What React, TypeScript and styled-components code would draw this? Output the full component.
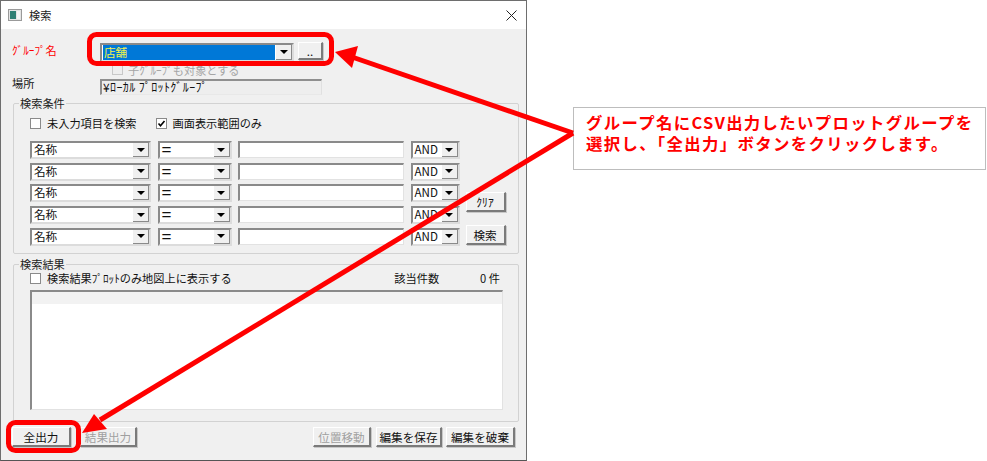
import React from "react";
import styled, { createGlobalStyle } from "styled-components";

const Global = createGlobalStyle`
  html, body { margin: 0; padding: 0; background: #fff; }
  body { width: 987px; height: 461px; overflow: hidden; font-family: "Noto Sans CJK JP", "Liberation Sans", sans-serif; font-size: 11.2px; color: #111; }
`;

const Page = styled.div`
  position: relative;
  width: 987px;
  height: 461px;
  display: flex;
  align-items: flex-start;
`;

const Dialog = styled.div`
  width: 527px;
  height: 461px;
  box-sizing: border-box;
  border: 1px solid #6e6e6e;
  border-bottom-color: #555;
  background: #f0f0f0;
  display: flex;
  flex-direction: column;
  flex: none;
`;

const TitleBar = styled.div`
  height: 28px;
  background: #fff;
  display: flex;
  align-items: center;
  padding: 0 9px 0 7px;
  gap: 7px;
  font-size: 11.2px;
  flex: none;
`;

const TitleText = styled.span`
  flex: 1;
  color: #222;
`;

const Body = styled.div`
  flex: 1;
  display: flex;
  flex-direction: column;
  padding: 14px 6px 0 11px;
`;

const TopRow = styled.div`
  display: grid;
  grid-template-columns: 84px 194px 25px;
  column-gap: 4px;
  align-items: start;
  height: 20px;
`;

const RedLabel = styled.span`
  color: #ff0000;
  line-height: 14px;
`;

const DisabledRow = styled.div`
  display: flex;
  align-items: center;
  gap: 5px;
  height: 13px;
  margin-left: 100px;
  color: #a5a5a5;
`;

const PlaceRow = styled.div`
  display: grid;
  grid-template-columns: 88px 222px;
  align-items: start;
  margin-top: 3px;
`;

const PlaceLabel = styled.span`
  line-height: 14px;
  margin-top: -3px;
`;

const ReadonlyField = styled.div`
  height: 16px;
  box-sizing: border-box;
  border: 1px solid #8f8f8f;
  border-left-width: 2px;
  border-top-width: 2px;
  border-right-color: #e0e0e0;
  border-bottom-color: #e8e8e8;
  background: #eeeeee;
  font-size: 12px;
  letter-spacing: 0.4px;
  line-height: 12px;
  padding-left: 1px;
  white-space: nowrap;
`;

const Group = styled.fieldset<{ $h: number; $mt: number }>`
  height: ${(p) => p.$h}px;
  width: 506px;
  margin: ${(p) => p.$mt}px 0 0 1px;
  padding: 0 15px 0 16px;
  box-sizing: border-box;
  border: 1px solid #d2d2d2;
  border-radius: 2px;
  min-width: 0;
  flex: none;
`;

const Legend = styled.legend`
  line-height: 12px;
  padding: 0 1px;
  margin-left: -11px;
  color: #222;
`;

const ChecksRow = styled.div`
  display: flex;
  align-items: center;
  gap: 19px;
  height: 18px;
  margin-top: 5px;
  margin-bottom: 9px;
`;

const CheckLabel = styled.label`
  display: flex;
  align-items: center;
  gap: 6px;
  white-space: nowrap;
`;

const Box = styled.span<{ $off?: boolean }>`
  width: 11px;
  height: 11px;
  flex: none;
  box-sizing: border-box;
  border: 1px solid ${(p) => (p.$off ? "#c8c8c8" : "#8a8a8a")};
  background: ${(p) => (p.$off ? "#eeeeee" : "#fff")};
  display: block;
`;

const SearchArea = styled.div`
  display: grid;
  grid-template-columns: auto 40px;
  column-gap: 6px;
`;

const Rows = styled.div`
  display: grid;
  grid-template-rows: repeat(5, 18px);
  row-gap: 3.7px;
`;

const Row = styled.div`
  display: grid;
  grid-template-columns: 121px 74px 166px 49px;
  column-gap: 6.5px;
`;

const Combo = styled.div<{ $top?: boolean }>`
  box-sizing: border-box;
  height: ${(p) => (p.$top ? "19px" : "18px")};
  background: #fff;
  border: 2px solid #8a8a8a;
  border-right-color: #dcdcdc;
  border-bottom-color: #dcdcdc;
  display: flex;
  align-items: stretch;
  min-width: 0;
`;

const ComboValue = styled.span<{ $big?: boolean }>`
  flex: 1;
  min-width: 0;
  font-family: ${(p) => (p.$big ? '"Liberation Sans", sans-serif' : "inherit")};
  font-size: ${(p) => (p.$big ? "17px" : "11.6px")};
  line-height: 13px;
  padding-left: 2px;
  white-space: nowrap;
`;

const SelectedValue = styled.span`
  flex: 1;
  background: #0078d7;
  color: #f4f44a;
  line-height: 14px;
  font-size: 11.6px;
  padding-left: 1px;
  margin: 0 1px;
`;

const ComboArrow = styled.span`
  width: 16px;
  flex: none;
  background: #f0f0f0;
  border-right: 1px solid #8a8a8a;
  border-bottom: 1px solid #8a8a8a;
  box-sizing: border-box;
  display: flex;
  align-items: center;
  justify-content: center;
  &::after {
    content: "";
    border-left: 4px solid transparent;
    border-right: 4px solid transparent;
    border-top: 4px solid #000;
  }
`;

const TextInput = styled.div`
  box-sizing: border-box;
  height: 17px;
  background: #fff;
  border: 2px solid #8a8a8a;
  border-right: 1px solid #e2e2e2;
  border-bottom: 1px solid #e2e2e2;
`;

const SideButtons = styled.div`
  display: flex;
  flex-direction: column;
  gap: 13px;
  padding-top: 51px;
`;

const Btn = styled.button<{ $w?: number; $h?: number; $mr?: number; $mt?: number }>`
  width: ${(p) => (p.$w ? `${p.$w}px` : "100%")};
  height: ${(p) => p.$h ?? 20}px;
  margin: ${(p) => p.$mt ?? 0}px ${(p) => p.$mr ?? 0}px 0 0;
  padding: 0;
  flex: none;
  background: #f0f0f0;
  border: 1px solid #fff;
  border-right: 2px solid #7a7a7a;
  border-bottom: 2px solid #7a7a7a;
  box-shadow: 1px 1px 0 #c8c8c8;
  font: inherit;
  font-size: 11.6px;
  line-height: 14px;
  color: ${(p) => (p.disabled ? "#a0a0a0" : "#111")};
  text-align: center;
`;

const ResultHead = styled.div`
  display: flex;
  align-items: center;
  height: 14px;
  margin-top: 1px;
`;

const Count = styled.span`
  margin-left: auto;
  padding-right: 3px;
  display: flex;
  gap: 41px;
  white-space: nowrap;
`;

const List = styled.div`
  width: 473px;
  height: 120px;
  box-sizing: border-box;
  margin-top: 5px;
  background: #fff;
  border: 2px solid #8a8a8a;
  border-right: 1px solid #e2e2e2;
  border-bottom: 1px solid #e2e2e2;
  display: flex;
  flex-direction: column;
`;

const ListHead = styled.div`
  height: 12px;
  background: #f2f2f2;
  flex: none;
`;

const Footer = styled.div`
  display: flex;
  align-items: flex-start;
  height: 20px;
  margin-top: 5px;
`;

const Spacer = styled.div`
  flex: 1;
`;

const Callout = styled.div`
  flex: none;
  width: 413px;
  height: 63px;
  box-sizing: border-box;
  margin: 107px 0 0 46px;
  border: 1px solid #bdbdbd;
  padding: 4px 12px;
  font-weight: 700;
  font-size: 16.4px;
  letter-spacing: 1.35px;
  line-height: 21px;
  color: #ff0000;
  background: #fff;
  white-space: nowrap;
`;

const Overlay = styled.svg`
  position: absolute;
  left: 0;
  top: 0;
  width: 987px;
  height: 461px;
  pointer-events: none;
`;

const SearchRow = () => (
  <Row>
    <Combo><ComboValue>名称</ComboValue><ComboArrow /></Combo>
    <Combo><ComboValue $big>=</ComboValue><ComboArrow /></Combo>
    <TextInput />
    <Combo><ComboValue>AND</ComboValue><ComboArrow /></Combo>
  </Row>
);

const Check = () => (
  <svg width="11" height="11" viewBox="0 0 11 11" style={{ display: "block", flex: "none" }}>
    <rect x="0.5" y="0.5" width="10" height="10" fill="#fff" stroke="#8a8a8a" />
    <path d="M2.5 5.5 L4.5 7.8 L8.5 3" fill="none" stroke="#000" strokeWidth="1.6" />
  </svg>
);

export default function App() {
  return (
    <Page>
      <Global />
      <Dialog>
        <TitleBar>
          <svg width="14" height="12" viewBox="0 0 14 12">
            <rect x="0.5" y="0.5" width="13" height="11" fill="#e4e4e4" stroke="#9a9a9a" />
            <rect x="2" y="2" width="6" height="8" fill="#2f7f74" />
            <rect x="9" y="2" width="3" height="8" fill="#f4f4f4" />
          </svg>
          <TitleText>検索</TitleText>
          <svg width="11" height="11" viewBox="0 0 11 11">
            <path d="M0.5 0.5 L10.5 10.5 M10.5 0.5 L0.5 10.5" stroke="#222" strokeWidth="1" />
          </svg>
        </TitleBar>
        <Body>
          <TopRow>
            <RedLabel>ｸﾞﾙｰﾌﾟ名</RedLabel>
            <Combo $top>
              <SelectedValue>店舗</SelectedValue>
              <ComboArrow />
            </Combo>
            <Btn $h={18} $mt={-1}>..</Btn>
          </TopRow>
          <DisabledRow>
            <Box $off />
            <span>子ｸﾞﾙｰﾌﾟも対象とする</span>
          </DisabledRow>
          <PlaceRow>
            <PlaceLabel>場所</PlaceLabel>
            <ReadonlyField>¥ﾛｰｶﾙ ﾌﾟﾛｯﾄｸﾞﾙｰﾌﾟ</ReadonlyField>
          </PlaceRow>
          <Group $h={157} $mt={2}>
            <Legend>検索条件</Legend>
            <ChecksRow>
              <CheckLabel><Box />未入力項目を検索</CheckLabel>
              <CheckLabel><Check />画面表示範囲のみ</CheckLabel>
            </ChecksRow>
            <SearchArea>
              <Rows>
                <SearchRow /><SearchRow /><SearchRow /><SearchRow /><SearchRow />
              </Rows>
              <SideButtons>
                <Btn>ｸﾘｱ</Btn>
                <Btn>検索</Btn>
              </SideButtons>
            </SearchArea>
          </Group>
          <Group $h={164} $mt={4}>
            <Legend>検索結果</Legend>
            <ResultHead>
              <CheckLabel><Box />検索結果ﾌﾟﾛｯﾄのみ地図上に表示する</CheckLabel>
              <Count><span>該当件数</span><span>0 件</span></Count>
            </ResultHead>
            <List><ListHead /></List>
          </Group>
          <Footer>
            <Btn $w={59} $mr={9}>全出力</Btn>
            <Btn $w={57} disabled>結果出力</Btn>
            <Spacer />
            <Btn $w={58} $mr={5} disabled>位置移動</Btn>
            <Btn $w={66} $mr={4}>編集を保存</Btn>
            <Btn $w={69} $mr={5}>編集を破棄</Btn>
          </Footer>
        </Body>
      </Dialog>
      <Callout>
        グループ名にCSV出力したいプロットグループを<br />
        選択し、「全出力」ボタンをクリックします。
      </Callout>
      <Overlay viewBox="0 0 987 461">
        <rect x="89.5" y="34.5" width="242" height="29" rx="7" fill="none" stroke="#ff0000" strokeWidth="5" />
        <rect x="8.5" y="422.5" width="70" height="28" rx="7" fill="none" stroke="#ff0000" strokeWidth="5" />
        <path d="M573 133 L352 57" stroke="#ff0000" strokeWidth="5" fill="none" />
        <path d="M573 133 L100 420" stroke="#ff0000" strokeWidth="5" fill="none" />
        <polygon points="335,52 358,46 352,68" fill="#ff0000" />
        <polygon points="82,433 94,414 107,429" fill="#ff0000" />
      </Overlay>
    </Page>
  );
}
